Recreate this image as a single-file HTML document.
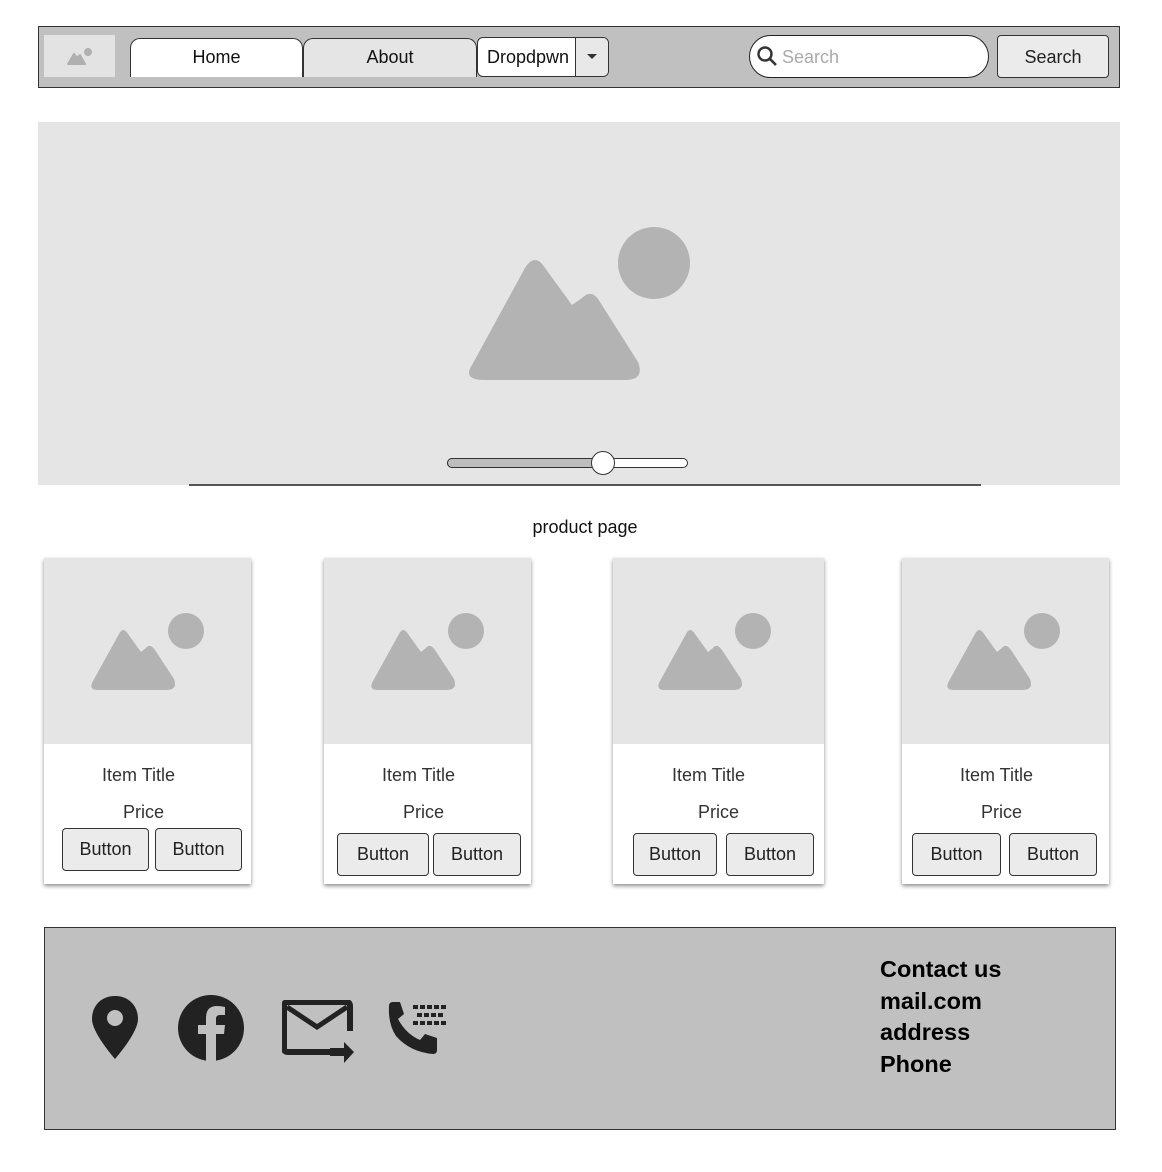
<!DOCTYPE html>
<html><head><style>
*{box-sizing:border-box;margin:0;padding:0}
body{width:1162px;height:1172px;background:#fff;font-family:"Liberation Sans",Arial,sans-serif;position:relative;overflow:hidden}
.a{position:absolute}
.nav{left:38px;top:26px;width:1082px;height:62px;background:#c0c0c0;border:1px solid #333}
.tab{top:38px;height:39px;border:1.5px solid #333;border-bottom:none;border-radius:10px 10px 0 0;text-align:center;line-height:36px;font-size:18px;color:#111}
.card{background:#fff;box-shadow:0 2px 4px rgba(0,0,0,.45);top:558px;height:326px}
.img{left:0;top:0;right:0;height:186px;background:#e5e5e5}
.t{font-size:18px;color:#333;text-align:center;width:100%}
.btn{height:43px;border:1.5px solid #333;border-radius:4px;background:#ebebeb;text-align:center;line-height:40px;font-size:18px;color:#222}
</style></head><body>
<div class="a nav"></div>
<div class="a" style="left:44px;top:35px;width:71px;height:42px;background:#e3e3e3"></div>
<svg class="a" style="left:66px;top:46px" width="28" height="20" viewBox="0 0 28 20"><path d="M2 18 L8 8 L11 12 L14 9 L19 18Z" fill="#b0b0b0" stroke="#b0b0b0" stroke-linejoin="round" stroke-width="2"/><circle cx="22" cy="6" r="4" fill="#b0b0b0"/></svg>
<div class="a tab" style="left:130px;width:173px;background:#fff">Home</div>
<div class="a tab" style="left:303px;width:174px;background:#e5e5e5">About</div>
<div class="a" style="left:477px;top:37px;width:132px;height:40px;border:1.5px solid #333;border-radius:6px;background:#fff;font-size:18px;line-height:38px;padding-left:9px;color:#111">Dropdpwn</div>
<div class="a" style="left:575px;top:38px;width:33px;height:38px;border-left:1.5px solid #333;background:#e8e8e8;border-radius:0 5px 5px 0"></div>
<div class="a" style="left:587px;top:54px;width:0;height:0;border-left:5px solid transparent;border-right:5px solid transparent;border-top:5px solid #333"></div>
<div class="a" style="left:749px;top:35px;width:240px;height:43px;border:1.5px solid #222;border-radius:22px;background:#fff;font-size:18px;line-height:42px;padding-left:32px;color:#aaa">Search</div>
<svg class="a" style="left:756px;top:45px" width="24" height="24" viewBox="0 0 24 24"><circle cx="9" cy="9" r="6.5" fill="none" stroke="#333" stroke-width="2.4"/><path d="M13.5 13.5L20 20" stroke="#333" stroke-width="2.6"/></svg>
<div class="a btn" style="left:997px;top:35px;width:112px;height:43px;font-size:18px;line-height:42px">Search</div>

<div class="a" style="left:38px;top:122px;width:1082px;height:363px;background:#e5e5e5"></div>
<svg class="a" style="left:460px;top:220px" width="240" height="170" viewBox="460 220 240 170"><path d="M472 365 L525 268 Q535 252 545 268 L572 305 L582 298 Q592 288 600 302 L638 362 Q645 380 625 380 L485 380 Q462 380 472 365Z" fill="#b3b3b3"/><circle cx="654" cy="263" r="36" fill="#b3b3b3"/></svg>
<div class="a" style="left:189px;top:484px;width:792px;height:1.5px;background:#555"></div>
<div class="a" style="left:447px;top:458px;width:241px;height:10px;border:1.2px solid #333;border-radius:5px;background:#fff"></div>
<div class="a" style="left:447px;top:458px;width:156px;height:10px;border:1.2px solid #333;border-radius:5px 0 0 5px;background:#bdbdbd"></div>
<div class="a" style="left:591px;top:451px;width:24px;height:24px;border:1.3px solid #333;border-radius:50%;background:#fff"></div>

<div class="a" style="left:0;width:1170px;top:517px;text-align:center;font-size:18px;color:#111">product page</div>

<div class="a card" style="left:44px;width:207px"><div class="a img"></div>
<svg class="a" style="left:42px;top:50px" width="130" height="90" viewBox="0 0 130 90"><path d="M7 73 L33 26 Q37 18 42 26 L55 44 L60 40 Q64 35 69 42 L88 71 Q92 82 80 82 L12 82 Q2 82 7 73Z" fill="#b3b3b3"/><circle cx="100" cy="23" r="18" fill="#b3b3b3"/></svg>
<div class="a t" style="top:207px;left:-9px">Item Title</div><div class="a t" style="top:244px;left:-4px">Price</div>
<div class="a btn" style="left:18px;top:270px;width:87px">Button</div><div class="a btn" style="left:111px;top:270px;width:87px">Button</div></div>

<div class="a card" style="left:324px;width:207px"><div class="a img"></div>
<svg class="a" style="left:42px;top:50px" width="130" height="90" viewBox="0 0 130 90"><path d="M7 73 L33 26 Q37 18 42 26 L55 44 L60 40 Q64 35 69 42 L88 71 Q92 82 80 82 L12 82 Q2 82 7 73Z" fill="#b3b3b3"/><circle cx="100" cy="23" r="18" fill="#b3b3b3"/></svg>
<div class="a t" style="top:207px;left:-9px">Item Title</div><div class="a t" style="top:244px;left:-4px">Price</div>
<div class="a btn" style="left:13px;top:275px;width:92px">Button</div><div class="a btn" style="left:109px;top:275px;width:88px">Button</div></div>

<div class="a card" style="left:613px;width:211px"><div class="a img"></div>
<svg class="a" style="left:40px;top:50px" width="130" height="90" viewBox="0 0 130 90"><path d="M7 73 L33 26 Q37 18 42 26 L55 44 L60 40 Q64 35 69 42 L88 71 Q92 82 80 82 L12 82 Q2 82 7 73Z" fill="#b3b3b3"/><circle cx="100" cy="23" r="18" fill="#b3b3b3"/></svg>
<div class="a t" style="top:207px;left:-10px">Item Title</div><div class="a t" style="top:244px;left:0px">Price</div>
<div class="a btn" style="left:20px;top:275px;width:84px">Button</div><div class="a btn" style="left:113px;top:275px;width:88px">Button</div></div>

<div class="a card" style="left:902px;width:207px"><div class="a img"></div>
<svg class="a" style="left:40px;top:50px" width="130" height="90" viewBox="0 0 130 90"><path d="M7 73 L33 26 Q37 18 42 26 L55 44 L60 40 Q64 35 69 42 L88 71 Q92 82 80 82 L12 82 Q2 82 7 73Z" fill="#b3b3b3"/><circle cx="100" cy="23" r="18" fill="#b3b3b3"/></svg>
<div class="a t" style="top:207px;left:-9px">Item Title</div><div class="a t" style="top:244px;left:-4px">Price</div>
<div class="a btn" style="left:10px;top:275px;width:89px">Button</div><div class="a btn" style="left:107px;top:275px;width:88px">Button</div></div>

<div class="a" style="left:44px;top:927px;width:1072px;height:203px;background:#c0c0c0;border:1px solid #333"></div>
<svg class="a" style="left:91px;top:995px" width="48" height="66" viewBox="0 0 48 66"><path d="M24 1 C10 1 1 11 1 24 C1 38 24 64 24 64 C24 64 47 38 47 24 C47 11 38 1 24 1Z" fill="#222"/><circle cx="24" cy="23" r="8" fill="#c0c0c0"/></svg>
<svg class="a" style="left:177px;top:994px" width="68" height="68" viewBox="0 0 68 68"><circle cx="34" cy="34" r="33" fill="#222"/><path d="M39 68 V40 H47 L48 31 H39 V25 Q39 21 43 21 H48 V13 Q44 12 40 12 Q29 12 29 24 V31 H21 V40 H29 V68Z" fill="#c0c0c0"/></svg>
<svg class="a" style="left:282px;top:1000px" width="74" height="66" viewBox="0 0 74 66"><path d="M48 52 H6 Q2 52 2 48 V6 Q2 2 6 2 H64 Q68 2 68 6 V31" fill="none" stroke="#222" stroke-width="6"/><path d="M5 7 L35 27 L65 7" fill="none" stroke="#222" stroke-width="5"/><path d="M48 48 H62 V42 L72 52 L62 63 V56 H48Z" fill="#222"/></svg>
<svg class="a" style="left:386px;top:1000px" width="62" height="56" viewBox="0 0 62 56"><path d="M3 6 Q3 2 7 2 H14 L18 14 L12 19 Q20 34 34 40 L39 34 L51 38 V50 Q51 54 47 54 Q24 52 10 36 Q2 24 3 6Z" fill="#222"/><g fill="#222"><rect x="27" y="5" width="5" height="4"/><rect x="34" y="5" width="5" height="4"/><rect x="41" y="5" width="5" height="4"/><rect x="48" y="5" width="5" height="4"/><rect x="55" y="5" width="5" height="4"/><rect x="31" y="13" width="5" height="4"/><rect x="38" y="13" width="5" height="4"/><rect x="45" y="13" width="5" height="4"/><rect x="52" y="13" width="5" height="4"/><rect x="27" y="21" width="5" height="4"/><rect x="34" y="21" width="5" height="4"/><rect x="41" y="21" width="5" height="4"/><rect x="48" y="21" width="5" height="4"/><rect x="55" y="21" width="5" height="4"/></g></svg>
<div class="a" style="left:880px;top:954px;font-size:23.5px;font-weight:bold;line-height:31.5px;color:#000">Contact us<br>mail.com<br>address<br>Phone</div>
</body></html>
